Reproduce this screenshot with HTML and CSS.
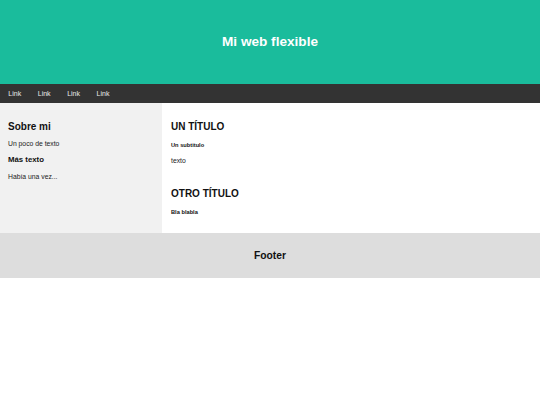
FILE: index.html
```html
<!DOCTYPE html>
<html lang="es">
<head>
<meta charset="utf-8">
<title>Mi web flexible</title>
<link rel="stylesheet" href="styles.css">
</head>
<body>
<header class="header">
  <h1 class="header-title">Mi web flexible</h1>
</header>
<nav class="navbar">
  <a class="nav-link" href="#">Link</a>
  <a class="nav-link" href="#">Link</a>
  <a class="nav-link" href="#">Link</a>
  <a class="nav-link" href="#">Link</a>
</nav>
<div class="row">
  <aside class="side">
    <h2 class="title">Sobre mi</h2>
    <p class="text text-first">Un poco de texto</p>
    <h3 class="subhead">Más texto</h3>
    <p class="text text-last">Había una vez...</p>
  </aside>
  <main class="main">
    <h2 class="title">UN TÍTULO</h2>
    <h5 class="small">Un subtitulo</h5>
    <p class="text text-main">texto</p>
    <h2 class="title title-second">OTRO TÍTULO</h2>
    <h5 class="small">Bla blabla</h5>
  </main>
</div>
<footer class="footer">
  <h2 class="footer-title">Footer</h2>
</footer>
</body>
</html>
```
FILE: styles.css
```css
* { box-sizing: border-box; }
body {
  margin: 0;
  font-family: "Liberation Sans", Arial, sans-serif;
  color: #111;
  background: #fff;
}
.header {
  background: #1abc9c;
  height: 84px;
  display: flex;
  align-items: center;
  justify-content: center;
}
.header-title {
  margin: 0;
  color: #fff;
  font-size: 13.6px;
  line-height: 16px;
  font-weight: bold;
}
.navbar {
  background: #333;
  height: 19px;
  display: flex;
  align-items: center;
  padding-left: 0;
}
.nav-link {
  color: #e8e8e8;
  text-decoration: none;
  font-size: 7px;
  line-height: 19px;
  padding: 0 8.3px;
}
.row {
  display: flex;
  height: 130px;
}
.side {
  width: 30%;
  background: #f1f1f1;
  padding: 18px 8px 0;
}
.main {
  width: 70%;
  background: #fff;
  padding: 18px 9px 0;
}
.title {
  margin: 0;
  font-size: 10px;
  line-height: 12px;
  font-weight: bold;
}
.title-second { margin-top: 23px; }
.text {
  margin: 0;
  font-size: 6.8px;
  line-height: 8px;
  color: #222;
}
.text-first { margin-top: 7px; }
.text-last { margin-top: 8px; }
.text-main { margin-top: 8.5px; }
.subhead {
  margin: 7px 0 0;
  font-size: 7.8px;
  line-height: 10px;
  font-weight: bold;
}
.small {
  margin: 8.5px 0 0;
  font-size: 5.7px;
  line-height: 7px;
  font-weight: bold;
}
.footer {
  background: #ddd;
  height: 45px;
  display: flex;
  align-items: center;
  justify-content: center;
}
.footer-title {
  margin: 0;
  font-size: 10.3px;
  line-height: 12px;
  font-weight: bold;
}
```
